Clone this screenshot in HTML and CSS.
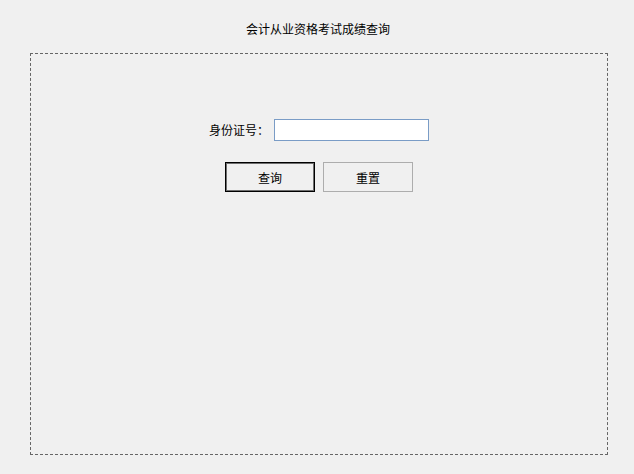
FILE: index.html
```html
<!DOCTYPE html>
<html lang="zh-CN">
<head>
  <meta charset="UTF-8">
  <title>会计从业资格考试成绩查询</title>
  <link rel="stylesheet" href="styles.css">
</head>
<body>
  <div class="title">会计从业资格考试成绩查询</div>

  <div class="panel">
    <div class="field">
      <label for="idcard">身份证号：</label>
      <input type="text" id="idcard">
    </div>
    <div class="actions">
      <button class="btn btn-default" type="button">查询</button>
      <button class="btn" type="button">重置</button>
    </div>
  </div>
</body>
</html>
```

FILE: styles.css
```css
body {
  margin: 0;
  background: #f0f0f0;
  color: #000;
  font-family: "Noto Sans CJK SC", "Liberation Sans", sans-serif;
  font-size: 12px;
}

.title {
  height: 53px;
  box-sizing: border-box;
  padding-top: 21px;
  padding-left: 2px;
  line-height: 16px;
  text-align: center;
}

.panel {
  width: 578px;
  height: 402px;
  box-sizing: border-box;
  margin-left: 30px;
  padding-top: 65px;
  border: 1px dashed #666;
}

.field {
  display: flex;
  justify-content: center;
  align-items: center;
  gap: 5px;
}

.field label {
  width: 60px;
  line-height: 16px;
}

.field input {
  width: 155px;
  height: 22px;
  box-sizing: border-box;
  margin: 0;
  border: 1px solid #7a9cc6;
  background: #fff;
  outline: none;
}

.actions {
  display: flex;
  justify-content: center;
  gap: 8px;
  margin-top: 21px;
}

.btn {
  width: 90px;
  height: 30px;
  box-sizing: border-box;
  margin: 0;
  padding: 0;
  border: 1px solid #adadad;
  background: #f0f0f0;
  font-family: inherit;
  font-size: 12px;
  color: #000;
}

.btn-default {
  border-color: #000;
  box-shadow: inset 0 0 0 1px #6e6e6e;
}
```
